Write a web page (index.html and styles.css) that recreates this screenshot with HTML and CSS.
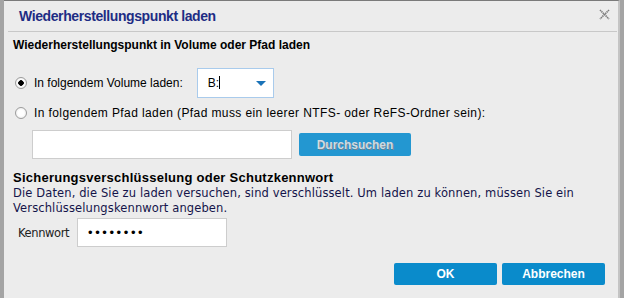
FILE: index.html
```html
<!DOCTYPE html>
<html>

<head>
    <title>Wiederherstellungspunkt laden</title>
    <link rel="stylesheet" href="styles.css">
</head>

<body>
    <div class="dialog">
        <div class="titlebar">
            <h1>Wiederherstellungspunkt laden</h1>
            <svg class="close" width="11" height="11" viewBox="0 0 11 11">
                <path d="M1 1 L10 10 M10 1 L1 10" stroke="#7d7d7d" stroke-width="1.6" stroke-dasharray="1.4 0.6" />
            </svg>
        </div>
        <div class="content">
            <h2>Wiederherstellungspunkt in Volume oder Pfad laden</h2>
            <div class="row volume-row">
                <label class="option"><input type="radio" name="src" checked> In folgendem Volume laden:</label>
                <div class="select">
                    <span>B:<span class="caret"></span></span>
                    <span class="arrow"></span>
                </div>
            </div>
            <div class="row path-label">
                <label class="option wide"><input type="radio" name="src"> In folgendem Pfad laden (Pfad muss ein leerer NTFS- oder ReFS-Ordner sein):</label>
            </div>
            <div class="row path-row">
                <input type="text" class="path-input">
                <button type="button" class="browse">Durchsuchen</button>
            </div>
            <h3>Sicherungsverschlüsselung oder Schutzkennwort</h3>
            <p class="note">Die Daten, die Sie zu laden versuchen, sind verschlüsselt. Um laden zu können, müssen Sie ein
                Verschlüsselungskennwort angeben.</p>
            <div class="row pw-row">
                <label for="pw">Kennwort</label>
                <input type="password" id="pw" class="pw-input" value="geheim12">
            </div>
            <div class="actions">
                <button type="button" class="primary">OK</button>
                <button type="button" class="primary">Abbrechen</button>
            </div>
        </div>
    </div>
</body>

</html>
```

FILE: styles.css
```css
body {
    margin: 0;
    background-color: #a4a4a4;
    font-family: "Liberation Sans", Arial, sans-serif;
    font-size: 12px;
    color: #000;
}

.dialog {
    margin-left: 4px;
    width: 614px;
    height: 297px;
    background-color: #ececec;
    border-top: 1px solid #7a7a7a;
    border-right: 2px solid #c4c4c4;
}

.titlebar {
    height: 30px;
    margin: 0 1px 0 4px;
    border-bottom: 1px solid #c8c8c8;
    display: flex;
    align-items: center;
    justify-content: space-between;
}

.titlebar h1 {
    margin: 0 0 0 11px;
    font-size: 14px;
    letter-spacing: -0.4px;
    font-weight: bold;
    color: #1e2c84;
}

.close {
    margin-right: 7px;
    margin-top: -4px;
}

.content {
    padding: 0 9px;
}

h2 {
    margin: 5px 0 0;
    font-size: 12px;
    line-height: 16px;
}

.row {
    display: flex;
    align-items: center;
}

.volume-row {
    margin-top: 15px;
    height: 30px;
}

.option {
    display: flex;
    align-items: center;
    white-space: nowrap;
}

.wide {
    letter-spacing: 0.4px;
}

input[type="radio"] {
    appearance: none;
    width: 12px;
    height: 12px;
    margin: 0 7px 0 2px;
    border: 1px solid #9c9c9c;
    border-radius: 50%;
    background: radial-gradient(circle, #ffffff 40%, #e4e4e4 100%);
}

input[type="radio"]:checked {
    background: radial-gradient(circle, #000 0 2.5px, #fff 3px 45%, #e4e4e4 100%);
}

.select {
    margin-left: 14px;
    background: #fff;
    border: 1px solid #a9cbec;
    display: flex;
    align-items: center;
    justify-content: space-between;
    padding: 0 7px 0 10px;
    box-sizing: border-box;
    width: 77px;
    height: 30px;
}

.caret {
    display: inline-block;
    width: 1px;
    height: 13px;
    background: #000;
    vertical-align: -2px;
}

.arrow {
    width: 0;
    height: 0;
    border-left: 5px solid transparent;
    border-right: 5px solid transparent;
    border-top: 5px solid #1a73b8;
}

.path-label {
    margin-top: 7px;
    height: 16px;
}

.path-row {
    margin-top: 9px;
}

.path-input {
    margin-left: 19px;
    width: 260px;
    height: 29px;
    box-sizing: border-box;
    border: 1px solid #cdcdcd;
    background: #fff;
}

.browse {
    margin-left: 7px;
    width: 112px;
    height: 23px;
    border: none;
    border-radius: 2px;
    background-color: #2397d1;
    color: #cfdbe3;
    font-family: "Liberation Sans", Arial, sans-serif;
    font-size: 12px;
    font-weight: bold;
    text-shadow: 1px 1px 0 #6d8595;
}

h3 {
    margin: 11px 0 0;
    font-size: 13px;
    letter-spacing: 0.25px;
    line-height: 16px;
}

.note {
    margin: 0;
    font-family: "DejaVu Sans", Tahoma, sans-serif;
    font-size: 11.5px;
    letter-spacing: 0.12px;
    line-height: 15px;
    color: #14144a;
}

.pw-row {
    margin-top: 2px;
}

.pw-row label {
    margin-left: 5px;
    width: 59px;
    font-family: "DejaVu Sans", Tahoma, sans-serif;
    font-size: 11.5px;
    letter-spacing: -0.4px;
    color: #222;
}

.pw-input {
    width: 150px;
    height: 29px;
    box-sizing: border-box;
    border: 1px solid #cdcdcd;
    background: #fff;
    padding-left: 10px;
    font-size: 13px;
    letter-spacing: 2.6px;
}

.actions {
    margin-top: 16px;
    display: flex;
    justify-content: flex-end;
    gap: 5px;
    padding-right: 4px;
}

.primary {
    width: 103px;
    height: 22px;
    border: none;
    border-radius: 2px;
    background-color: #0a8bcb;
    color: #fff;
    font-family: "Liberation Sans", Arial, sans-serif;
    font-size: 12px;
    font-weight: bold;
}
```
